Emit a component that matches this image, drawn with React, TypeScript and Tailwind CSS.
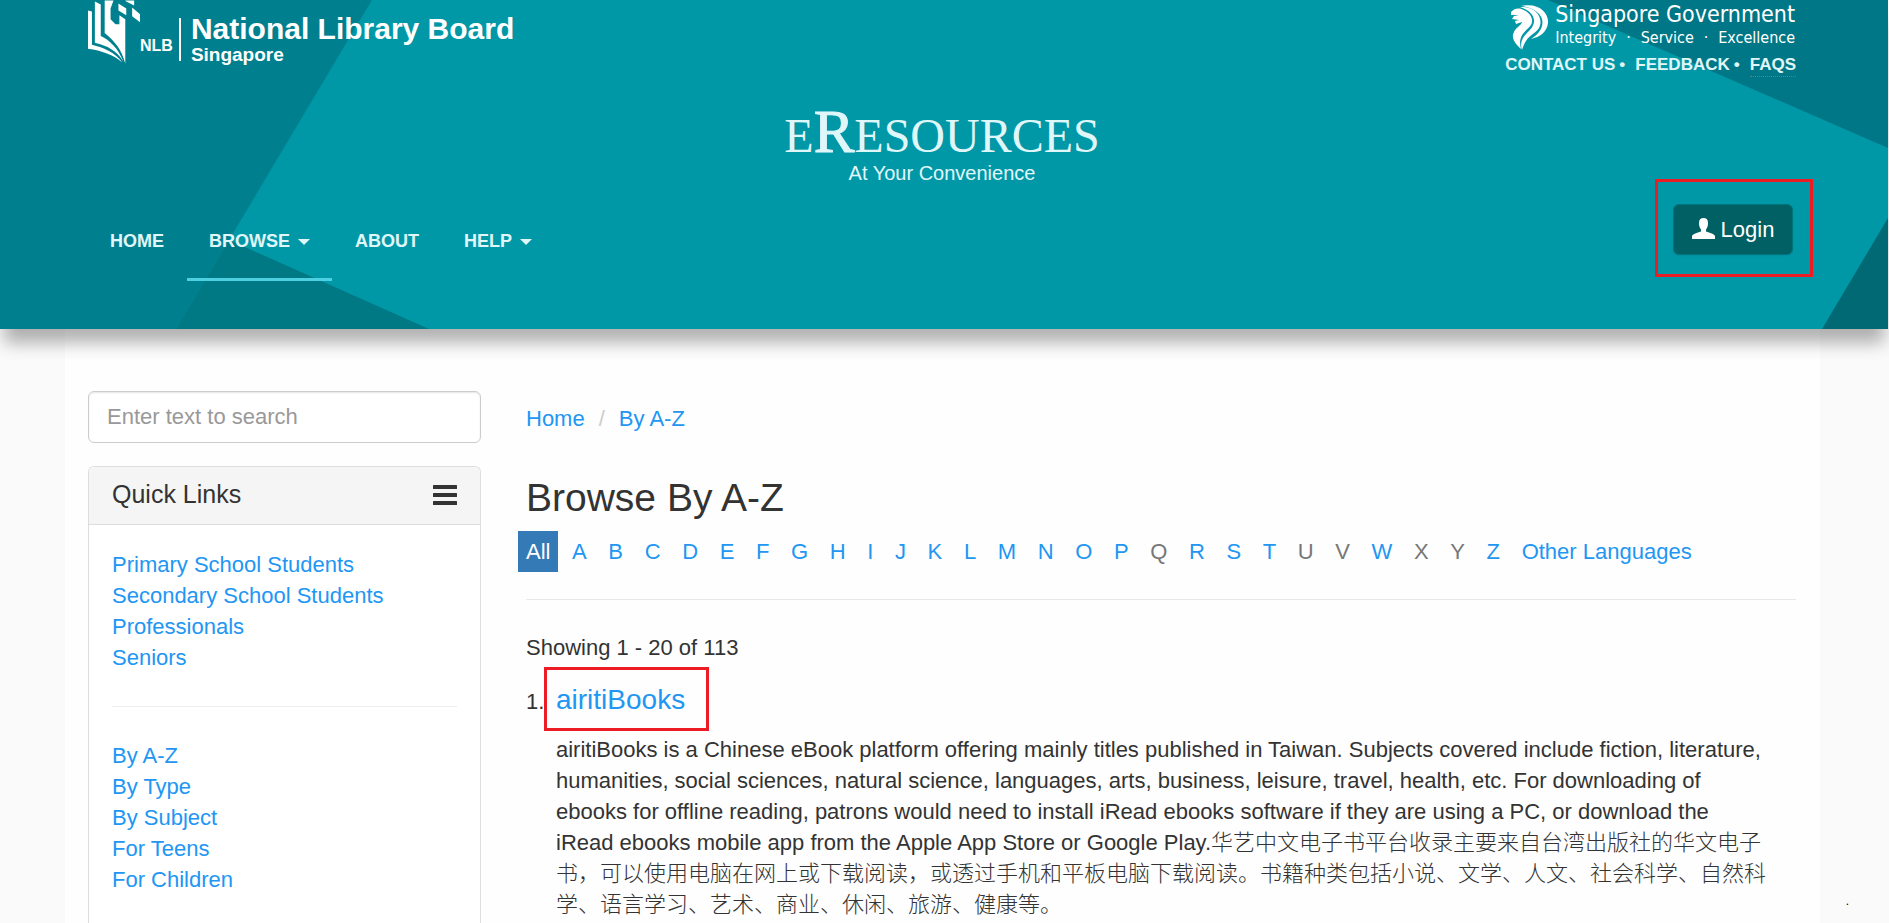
import React from "react";

const audienceLinks = ["Primary School Students", "Secondary School Students", "Professionals", "Seniors"];
const browseLinks = ["By A-Z", "By Type", "By Subject", "For Teens", "For Children"];
const letters = "ABCDEFGHIJKLMNOPQRSTUVWXYZ".split("");
const emptyLetters = ["Q", "U", "V", "X", "Y"];
const airitiDescription =
  "airitiBooks is a Chinese eBook platform offering mainly titles published in Taiwan. Subjects covered include fiction, literature, humanities, social sciences, natural science, languages, arts, business, leisure, travel, health, etc. For downloading of ebooks for offline reading, patrons would need to install iRead ebooks software if they are using a PC, or download the iRead ebooks mobile app from the Apple App Store or Google Play.华艺中文电子书平台收录主要来自台湾出版社的华文电子书，可以使用电脑在网上或下载阅读，或透过手机和平板电脑下载阅读。书籍种类包括小说、文学、人文、社会科学、自然科学、语言学习、艺术、商业、休闲、旅游、健康等。";

function Backdrop() {
  return (
    <svg
      className="absolute inset-0 -z-10 h-full w-full"
      viewBox="0 0 1888 329"
      preserveAspectRatio="none"
      aria-hidden="true"
    >
      <rect width="1888" height="329" fill="#0097a7" />
      <polygon points="0,0 372,0 176,329 0,329" fill="#00808f" />
      <polygon points="229,240 429,329 176,329" fill="#007985" />
      <polygon points="1548,0 1888,0 1888,148" fill="#007786" />
      <polygon points="1888,218 1888,329 1822,329" fill="#006974" />
    </svg>
  );
}

function BookMark() {
  return (
    <svg className="h-16 w-[52px] shrink-0" viewBox="0 0 53 64" fill="#fff" aria-hidden="true">
      <path d="M0 10 L4 11 L4 45 C16 48 28 53 35 63 C26 55 14 51 0 49 Z" />
      <path d="M7 1 L13 4 L13 36 C22 40 31 49 36 62 C29 51 20 46 7 43 Z" />
      <path d="M17 0 L26 0 L23 8 L23 19 L28 24 L32 24 L32 15 L38 19 L38 64 C34 50 28 42 17 33 Z" />
      <path d="M24 9 L31 13 L31 21 L24 17 Z" fill="#00808f" />
      <path d="M31 3 L39 8 L39 15 L31 10 Z" />
      <path d="M38 0 L47 0 L47 5 L39 1 Z" />
      <path d="M45 7 L53 14 L53 22 L45 16 Z" />
    </svg>
  );
}

function LionHead() {
  return (
    <svg className="h-[45px] w-[38px] shrink-0" viewBox="0 0 38 45" fill="#fff" aria-hidden="true">
      <path d="M10 1 C28 -3 38 8 37 18 C36 27 29 32 20 34 C28 29 33 22 31 14 C29 7 20 2 10 1 Z" />
      <path d="M9 2 C21 1 30 8 29.500 18 C29 27 19 29 15 36 C13 39 12 42 11 45 C10 42 9.500 38 11.500 34 C14 28 23 24 23 16 C23 10 18 5 9 2 Z" />
      <path d="M0 7 C3 4 5 3 9 3.500 C18 6 23 13 20.500 19 C18 24 11 27 9.500 34 C8.500 38 9.500 41 10 44 C3 38 0 32 3 27 C5 22 10 21 11 17 L5 19 L4 16 L8 15 L1 14 L3 11 L8 10 L0 10 Z" />
    </svg>
  );
}

function Caret() {
  return (
    <svg className="mt-0.5 h-[6px] w-3" viewBox="0 0 12 6" fill="#e0f7fa" aria-hidden="true">
      <path d="M0 0 H12 L6 6 Z" />
    </svg>
  );
}

function UserIcon() {
  return (
    <svg className="mb-0.5 h-[21px] w-[23px]" viewBox="0 0 23 21" fill="#fff" aria-hidden="true">
      <path d="M7 5 C7 1.500 8.500 0 11.500 0 C14.500 0 16 1.500 16 5 C16 8 15.300 10 14 11.500 L14 13.500 C18 14.800 22.300 16 23 18 L23 21 L0 21 L0 18 C.7 16 5 14.800 9 13.500 L9 11.500 C7.700 10 7 8 7 5 Z" />
    </svg>
  );
}

function MenuBars() {
  return (
    <svg className="h-5 w-6" viewBox="0 0 24 20" fill="#333" aria-hidden="true">
      <rect width="24" height="4" rx="0.500" />
      <rect y="8" width="24" height="4" rx="0.500" />
      <rect y="16" width="24" height="4" rx="0.500" />
    </svg>
  );
}

function LinkList({ items }: { items: string[] }) {
  return (
    <ul className="leading-[31px]">
      {items.map((item) => (
        <li key={item}>
          <a href="#" className="text-[#2196f3]">{item}</a>
        </li>
      ))}
    </ul>
  );
}

function Header() {
  const navItem = "flex items-center gap-2 border-b-3 px-[22px] pt-5 pb-[25px]";
  return (
    <header className="relative isolate z-10 mr-px pr-[92px] pb-12 pl-[88px] text-[#e0f7fa] shadow-[0_18px_16px_-4px_rgba(0,0,0,0.3)]">
      <Backdrop />
      <div className="flex items-start justify-between">
        <a href="#" className="flex font-bold text-white">
          <BookMark />
          <span className="pt-9 text-base leading-5">NLB</span>
          <span className="mt-[18px] ml-1.5 h-[43px] w-0.5 bg-white" />
          <span className="ml-2.5 flex flex-col pt-[13px]">
            <span className="text-[30px] leading-[32px]">National Library Board</span>
            <span className="text-[19px] leading-5">Singapore</span>
          </span>
        </a>
        <div className="flex flex-col">
          <a href="#" className="flex pt-[5px] pl-1.5 font-['DejaVu_Sans_Condensed','Noto_Sans',sans-serif] text-white">
            <LionHead />
            <span className="-mt-1 ml-1.5 flex flex-col">
              <span className="text-[23px] leading-[27px]">Singapore Government</span>
              <span className="flex justify-between text-base leading-5">
                <span>Integrity</span>
                <span>·</span>
                <span>Service</span>
                <span>·</span>
                <span>Excellence</span>
              </span>
            </span>
          </a>
          <div className="mt-1 flex justify-end gap-1 text-[17px] leading-[22px] font-bold">
            <a href="#">CONTACT US</a>
            <span>•</span>
            <a href="#" className="ml-1.5">FEEDBACK</a>
            <span>•</span>
            <a href="#" className="ml-1.5 border-b border-dotted border-[#777]">FAQS</a>
          </div>
        </div>
      </div>
      <div className="mt-6 text-center">
        <h1 className="flex items-baseline justify-center font-['Liberation_Serif',serif] text-5xl leading-none">
          <span className="leading-none">E</span>
          <span className="text-[61px] leading-none [-webkit-text-stroke:1px_#e0f7fa]">R</span>
          <span className="leading-none">ESOURCES</span>
        </h1>
        <p className="text-xl leading-[22px]">At Your Convenience</p>
      </div>
      <div className="mt-5 flex items-end justify-between">
        <nav className="flex gap-px text-lg leading-6 font-bold">
          <a href="#" className={`${navItem} border-transparent`}>HOME</a>
          <a href="#" className={`${navItem} border-[#4dd0e1]`}>BROWSE <Caret /></a>
          <a href="#" className={`${navItem} border-transparent`}>ABOUT</a>
          <a href="#" className={`${navItem} border-transparent`}>HELP <Caret /></a>
        </nav>
        <div className="relative mr-[3px] mb-[26px]">
          <button
            type="button"
            className="flex h-[51px] w-[120px] items-center justify-center gap-1.5 rounded-md border border-[#00737b] bg-[#006064] text-[22px] text-white shadow-xs"
          >
            <UserIcon />
            Login
          </button>
          <span className="pointer-events-none absolute -top-[25px] -right-5 -bottom-[22px] -left-[18px] border-3 border-[#ed1c24]" />
        </div>
      </div>
    </header>
  );
}

function Sidebar() {
  return (
    <aside className="flex w-[393px] shrink-0 flex-col pt-[62px]">
      <input
        type="search"
        aria-label="Search"
        placeholder="Enter text to search"
        className="h-[52px] rounded-md border border-[#ccc] bg-white px-[18px] shadow-[inset_0_1px_2px_rgba(0,0,0,0.1)] outline-none placeholder:text-[#999]"
      />
      <section className="mt-[23px] flex flex-1 flex-col rounded-t-md border border-b-0 border-[#ddd] bg-white">
        <div className="flex items-center justify-between rounded-t-md border-b border-[#ddd] bg-[#f5f5f5] px-[23px] pt-[11px] pb-3.5">
          <h2 className="text-[25px] leading-8">Quick Links</h2>
          <button type="button" aria-label="Toggle quick links" className="pt-0.5">
            <MenuBars />
          </button>
        </div>
        <div className="px-[23px] pt-6">
          <LinkList items={audienceLinks} />
          <hr className="my-[33px] border-[#eee]" />
          <LinkList items={browseLinks} />
        </div>
      </section>
    </aside>
  );
}

function Content() {
  return (
    <main className="min-w-0 flex-1 pt-[74px]">
      <nav aria-label="Breadcrumb" className="flex">
        <a href="#" className="text-[#2196f3]">Home</a>
        <span className="px-3.5 text-[#ccc]">/</span>
        <a href="#" className="text-[#2196f3]">By A-Z</a>
      </nav>
      <h2 className="mt-[41px] text-[39px] leading-[44px]">Browse By A-Z</h2>
      <div className="mt-[11px] -ml-2 flex max-w-[1182px] justify-between">
        <a href="#" className="bg-[#337ab7] px-2 pt-[5px] pb-1 text-white">All</a>
        {letters.map((letter) =>
          emptyLetters.includes(letter) ? (
            <span key={letter} className="px-2 pt-[5px] pb-1 text-[#777]">{letter}</span>
          ) : (
            <a key={letter} href="#" className="px-2 pt-[5px] pb-1 text-[#2196f3]">{letter}</a>
          ),
        )}
        <a href="#" className="px-2 pt-[5px] pb-1 whitespace-nowrap text-[#2196f3]">Other Languages</a>
      </div>
      <hr className="mt-[27px] border-[#e8e8e8]" />
      <p className="mt-8">Showing 1 - 20 of 113</p>
      <ol className="mt-5">
        <li className="flex items-baseline">
          <span className="w-[30px] shrink-0">1.</span>
          <div>
            <h3 className="relative inline-block text-[28px] leading-8">
              <a href="#" className="text-[#2196f3]">airitiBooks</a>
              <span className="pointer-events-none absolute -top-[17px] -right-6 -bottom-[15px] -left-3 border-3 border-[#ed1c24]" />
            </h3>
            <p className="mt-4 pr-[26px] leading-[31px] font-light">{airitiDescription}</p>
          </div>
        </li>
      </ol>
    </main>
  );
}

export default function App() {
  return (
    <div className="relative flex min-h-screen flex-col bg-[#fafafa] font-['Liberation_Sans','Noto_Sans_CJK_SC',sans-serif] text-[22px] leading-8 text-[#333]">
      <Header />
      <div className="flex flex-1 pr-[69px] pl-[65px]">
        <div className="flex flex-1 gap-[45px] bg-[#fefefe] pr-6 pl-[23px]">
          <Sidebar />
          <Content />
        </div>
      </div>
      <span className="absolute right-10 bottom-3.5 text-xs leading-4 text-black">.</span>
    </div>
  );
}
